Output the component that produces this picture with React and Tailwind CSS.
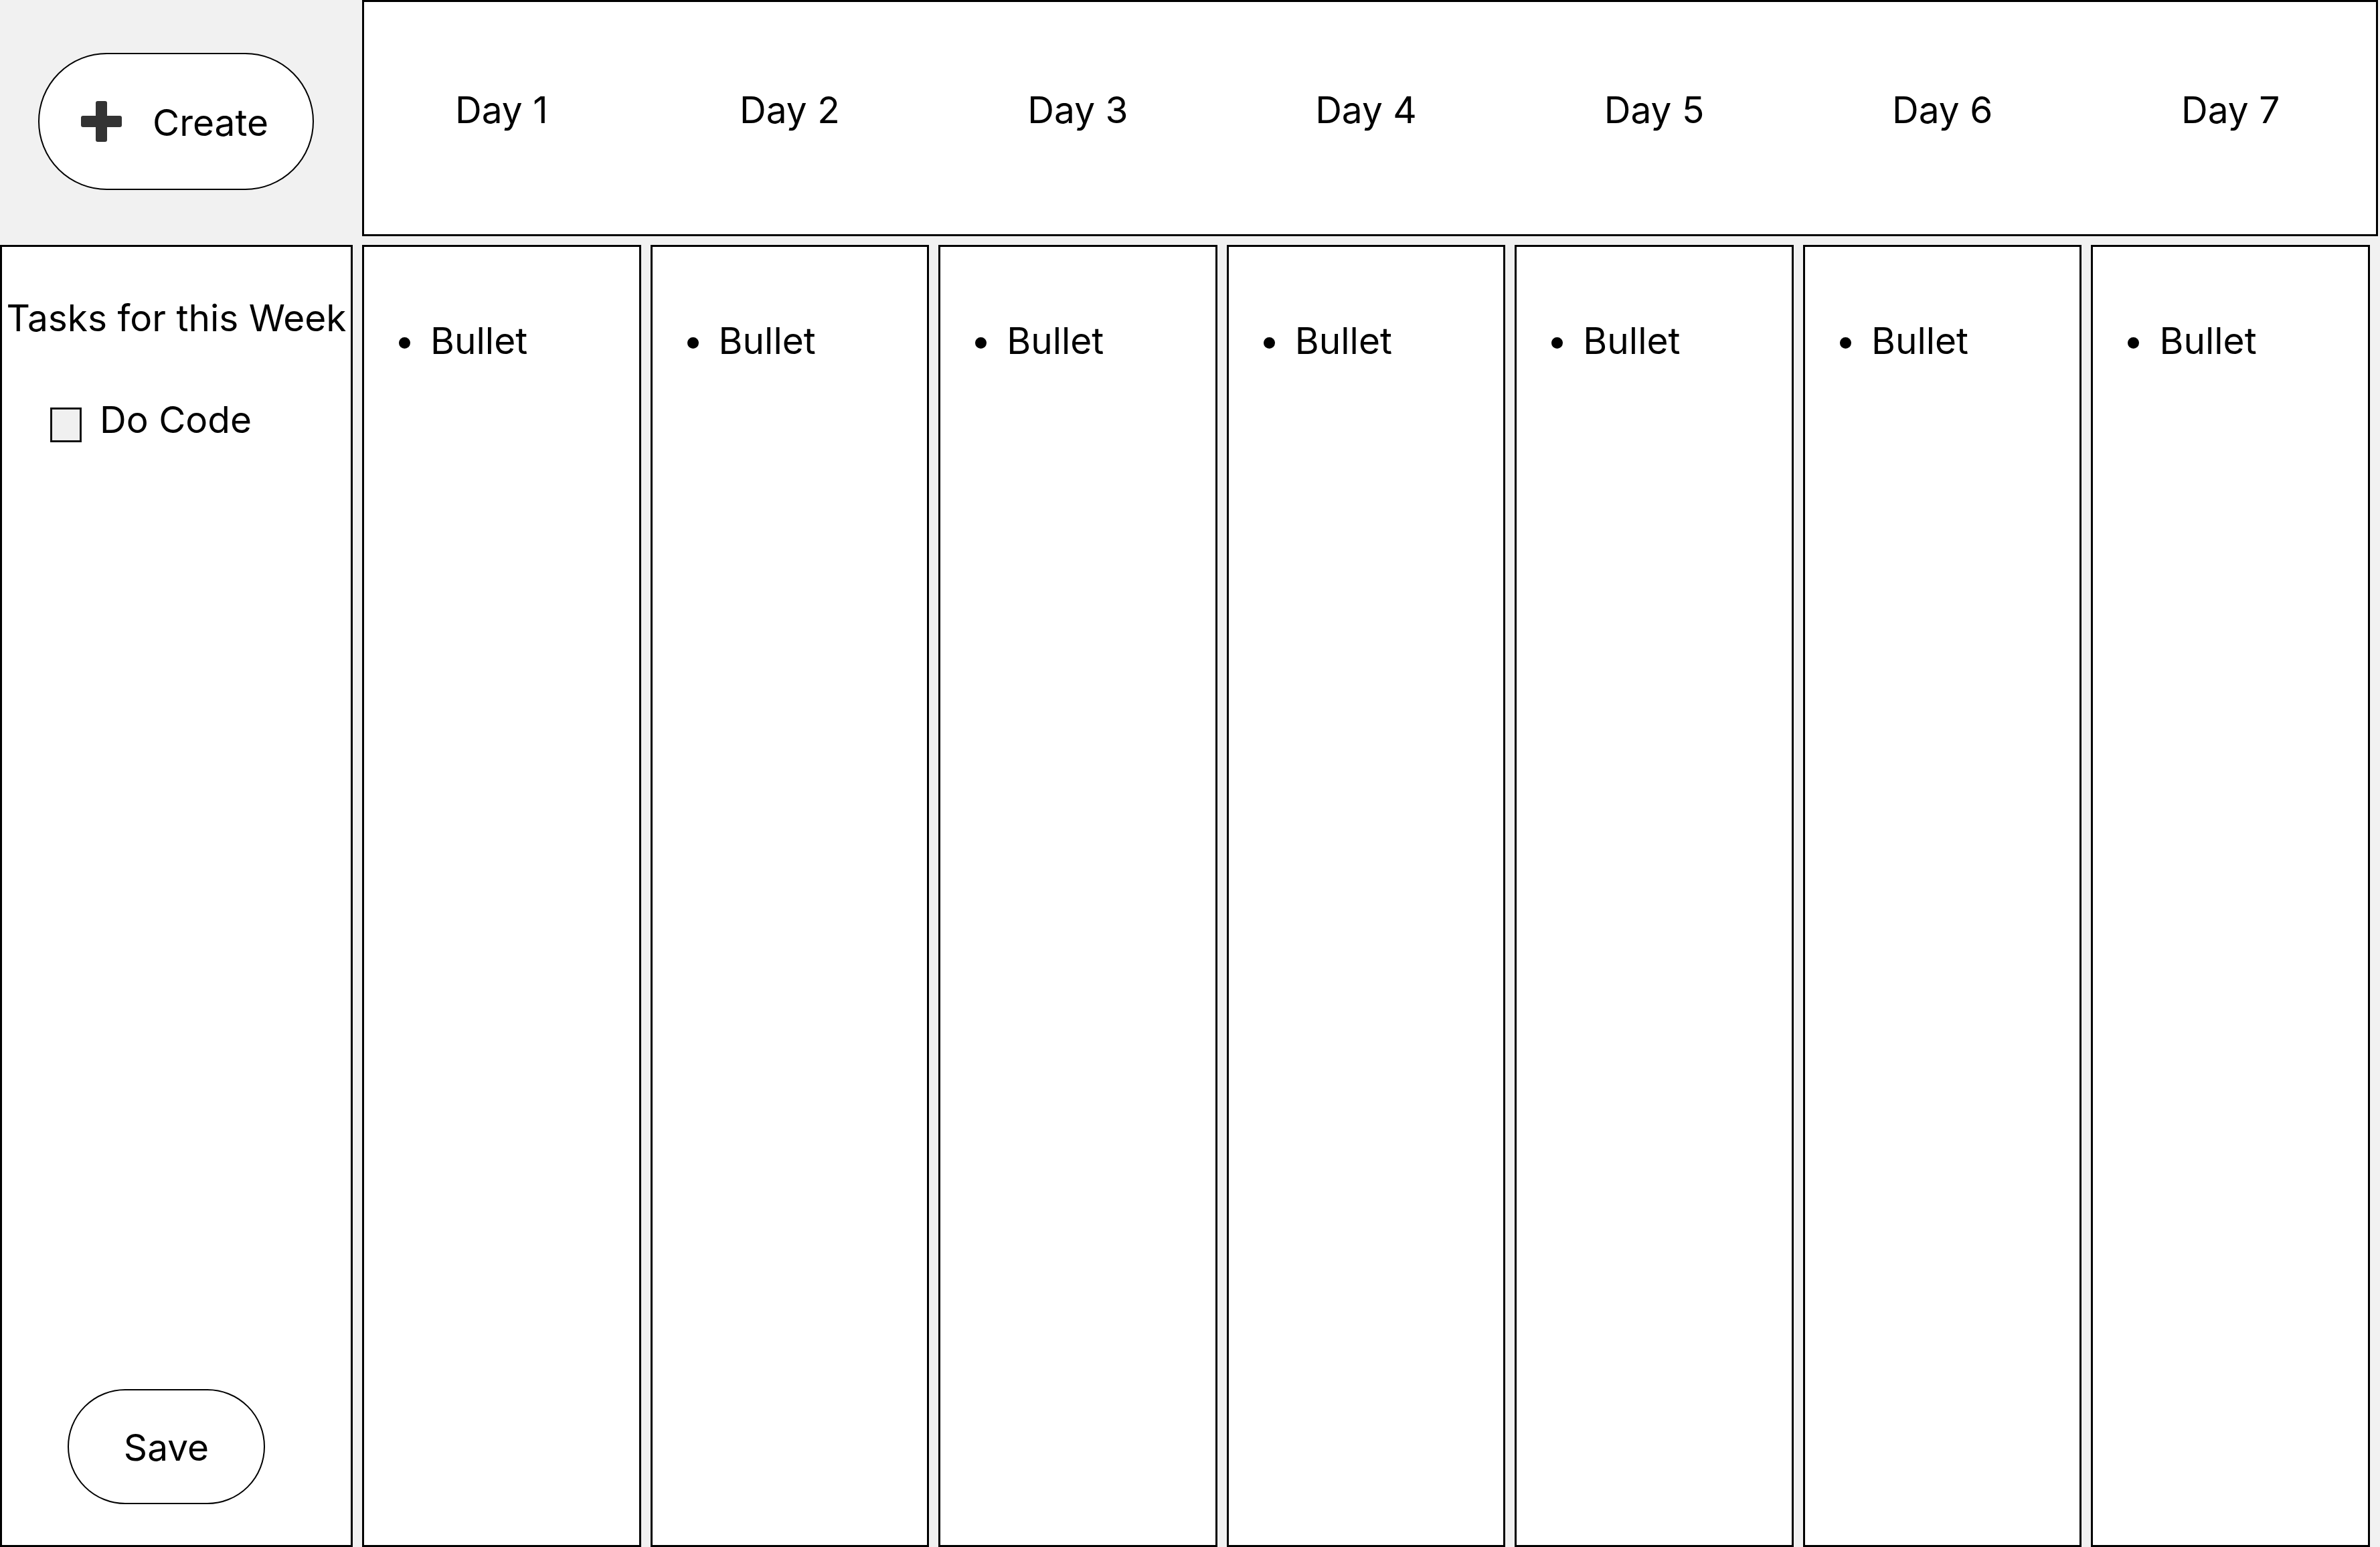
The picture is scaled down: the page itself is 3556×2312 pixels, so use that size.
import React from "react";

const days = ["Day 1", "Day 2", "Day 3", "Day 4", "Day 5", "Day 6", "Day 7"];

// Chunky plus glyph used on the Create button
function PlusIcon() {
  return (
    <svg width="61" height="61" viewBox="0 0 61 61" className="shrink-0">
      <rect x="22" y="0" width="17" height="61" rx="3" fill="#333333" />
      <rect x="0" y="22" width="61" height="17" rx="3" fill="#333333" />
    </svg>
  );
}

function DayColumn() {
  return (
    <div className="flex-1 bg-white border-[3px] border-black pt-[107px] pl-[52px]">
      <ul>
        <li className="flex items-center gap-[30px]">
          <span className="w-[17px] h-[17px] mt-[6px] rounded-full bg-black shrink-0" />
          <span>Bullet</span>
        </li>
      </ul>
    </div>
  );
}

export default function App() {
  return (
    <div
      className="h-[2312px] w-full bg-[#f1f1f1] flex flex-col gap-[13px] text-[55px] leading-[1.2] text-black overflow-hidden"
      style={{ fontFamily: "Inter, 'Noto Sans', sans-serif" }}
    >
      {/* Top bar */}
      <div className="flex h-[353px] shrink-0">
        <div className="w-[541px] shrink-0 pl-[57px] pt-[79px]">
          <button className="w-[412px] h-[205px] rounded-full bg-white border-[2.5px] border-black flex items-center pl-[62px] gap-[46px]">
            <PlusIcon />
            <span className="mt-[2px]">Create</span>
          </button>
        </div>
        <div className="flex-1 mr-[3px] bg-white border-[3px] border-black pt-[128px] pr-[9px]">
          <div className="grid grid-cols-7 gap-[14px] -ml-[3px]">
            {days.map((d) => (
              <div key={d} className="text-center">
                {d}
              </div>
            ))}
          </div>
        </div>
      </div>

      {/* Week board */}
      <div className="flex-1 flex gap-[14px] pr-[15px]">
        <div className="w-[527px] shrink-0 bg-white border-[3px] border-black flex flex-col">
          <div className="pt-[73px] text-center whitespace-nowrap">Tasks for this Week</div>
          <div className="flex items-start mt-[86px] pl-[72px] gap-[27px]">
            <div className="w-[47px] h-[52px] mt-[15px] bg-[#f0f0f0] border-[3px] border-[#111]" />
            <span>Do Code</span>
          </div>
          <div className="mt-auto mb-[61px] ml-[98px]">
            <button className="w-[295px] h-[172px] rounded-full bg-white border-[2.5px] border-black flex items-center justify-center">
              <span className="mt-[2px]">Save</span>
            </button>
          </div>
        </div>
        {days.map((d) => (
          <DayColumn key={d} />
        ))}
      </div>
    </div>
  );
}
